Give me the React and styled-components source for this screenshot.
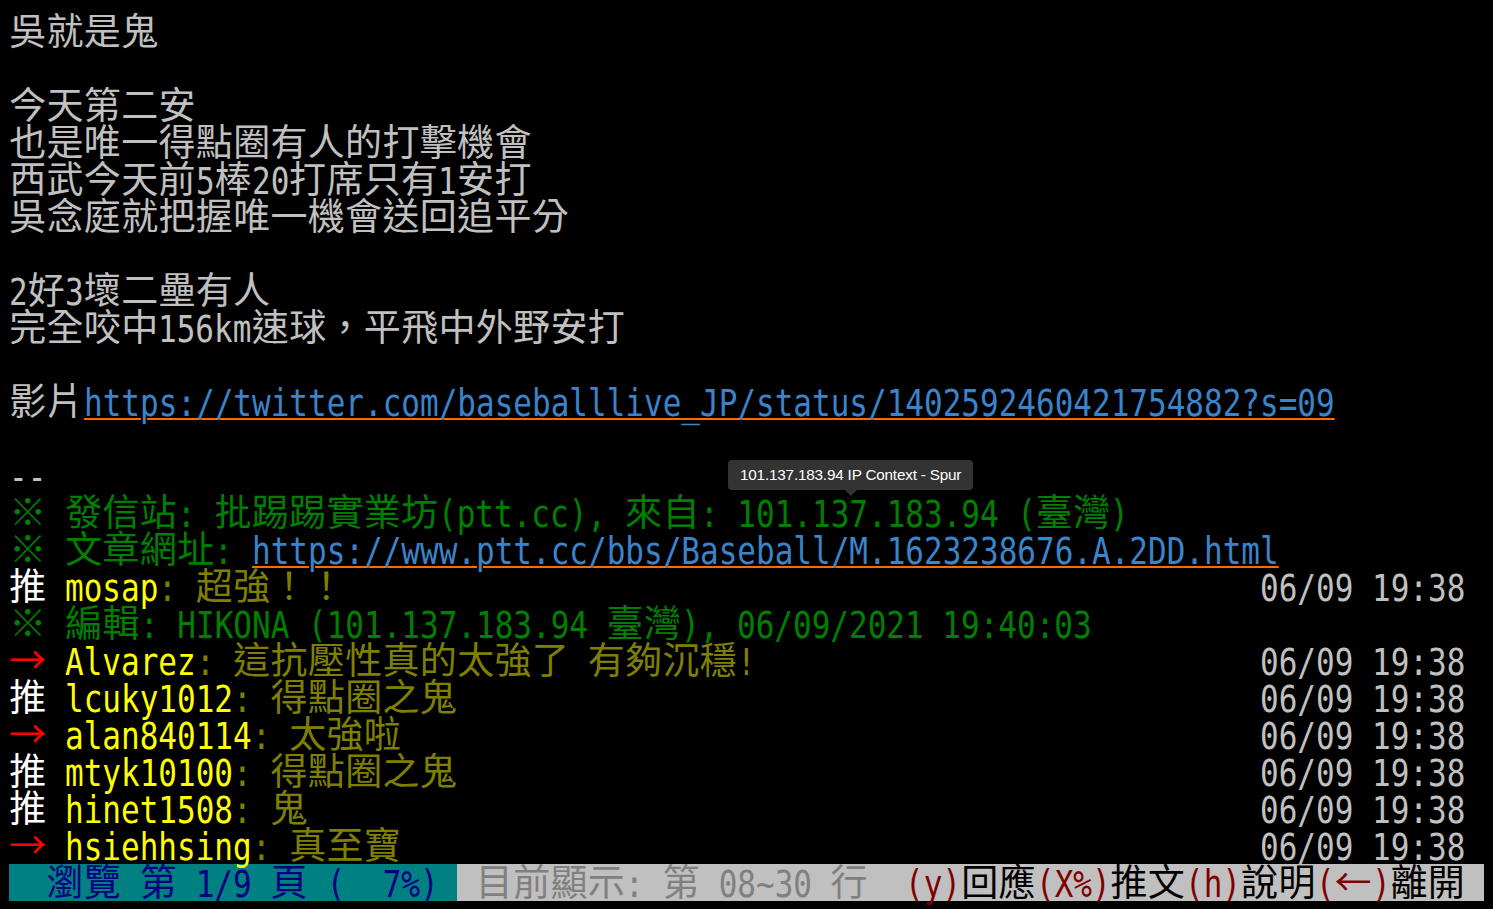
import React from 'react';
import styled, { createGlobalStyle, css } from 'styled-components';

// one terminal cell (half width) and one row, in px
const CELL = 18.67;
const ROW = 37;

const C = {
    gray: '#c0c0c0',
    white: '#ffffff',
    green: '#008000',
    yellow: '#ffff00',
    olive: '#808000',
    red: '#ff0000',
    link: '#3a84cc',
    navy: '#000080',
    teal: '#008080',
    dim: '#808080',
    maroon: '#800000',
    black: '#000000',
};

const isWide = ch => {
    const c = ch.codePointAt(0);
    return c === 0x203b || c >= 0x2190;
};

const widthOf = s => [...s].reduce((w, ch) => w + (isWide(ch) ? 2 : 1), 0);

// split a string into runs of half width text and single wide chars
const splitRuns = text => {
    const runs = [];
    let buf = '';
    [...text].forEach(ch => {
        if (isWide(ch)) {
            if (buf) runs.push({ wide: false, text: buf });
            buf = '';
            runs.push({ wide: true, text: ch });
        } else {
            buf += ch;
        }
    });
    if (buf) runs.push({ wide: false, text: buf });
    return runs;
};

const push = (tag, user, text) => {
    const head = tag === '推' ? ['推 ', 'white'] : ['→ ', 'red'];
    const body = ': ' + text;
    const used = 3 + user.length + widthOf(body);
    return [head, [user, 'yellow'], [body + ' '.repeat(67 - used), 'olive'], ['06/09 19:38', 'gray']];
};

const lines = [
    [['吳就是鬼', 'gray']],
    [],
    [['今天第二安', 'gray']],
    [['也是唯一得點圈有人的打擊機會', 'gray']],
    [['西武今天前5棒20打席只有1安打', 'gray']],
    [['吳念庭就把握唯一機會送回追平分', 'gray']],
    [],
    [['2好3壞二壘有人', 'gray']],
    [['完全咬中156km速球，平飛中外野安打', 'gray']],
    [],
    [['影片', 'gray'], ['https://twitter.com/baseballlive_JP/status/1402592460421754882?s=09', 'link', { link: true }]],
    [],
    [['--', 'gray']],
    [['※ 發信站: 批踢踢實業坊(ptt.cc), 來自: 101.137.183.94 (臺灣)', 'green']],
    [['※ 文章網址: ', 'green'], ['https://www.ptt.cc/bbs/Baseball/M.1623238676.A.2DD.html', 'link', { link: true }]],
    push('推', 'mosap', '超強！！'),
    [['※ 編輯: HIKONA (101.137.183.94 臺灣), 06/09/2021 19:40:03', 'green']],
    push('→', 'Alvarez', '這抗壓性真的太強了 有夠沉穩!'),
    push('推', 'lcuky1012', '得點圈之鬼'),
    push('→', 'alan840114', '太強啦'),
    push('推', 'mtyk10100', '得點圈之鬼'),
    push('推', 'hinet1508', '鬼'),
    push('→', 'hsiehhsing', '真至寶'),
];

const statusBar = [
    ['  瀏覽 第 1/9 頁 (  7%) ', 'navy', { bg: C.teal }],
    [' 目前顯示: 第 08~30 行  ', 'dim', { bg: C.gray }],
    ['(y)', 'maroon', { bg: C.gray }],
    ['回應', 'black', { bg: C.gray }],
    ['(X%)', 'maroon', { bg: C.gray }],
    ['推文', 'black', { bg: C.gray }],
    ['(h)', 'maroon', { bg: C.gray }],
    ['說明', 'black', { bg: C.gray }],
    ['(', 'maroon', { bg: C.gray }],
    ['←', 'maroon', { bg: C.gray }],
    [')', 'maroon', { bg: C.gray }],
    ['離開', 'black', { bg: C.gray }],
    [' ', 'black', { bg: C.gray }],
];

const Line = ({ segs }) => (
    <Row>
        {segs.flatMap(([text, color, opts = {}], i) =>
            splitRuns(text).map((run, j) =>
                run.wide ? (
                    <Wide key={`${i}-${j}`} $fg={C[color]} $bg={opts.bg}>{run.text}</Wide>
                ) : (
                    <Half key={`${i}-${j}`} $cols={run.text.length} $fg={C[color]} $bg={opts.bg}>
                        <Squeeze $link={opts.link}>{run.text}</Squeeze>
                    </Half>
                )
            )
        )}
    </Row>
);

const App = () => (
    <>
        <GlobalStyle />
        <Screen>
            {lines.map((segs, i) => <Line key={i} segs={segs} />)}
            <Line segs={statusBar} />
            <Tooltip>101.137.183.94 IP Context - Spur</Tooltip>
        </Screen>
    </>
);

const GlobalStyle = createGlobalStyle`
    html, body {
        margin: 0;
        padding: 0;
        background: #000;
    }
    body {
        overflow: hidden;
    }
`;

const Screen = styled.div`
    position: relative;
    width: 1493px;
    height: 909px;
    box-sizing: border-box;
    padding: 13px 0 0 9px;
    background: #000;
`;

const Row = styled.div`
    display: flex;
    height: ${ROW}px;
    white-space: nowrap;
`;

const Half = styled.span`
    flex: none;
    width: ${p => p.$cols * CELL}px;
    height: ${ROW}px;
    overflow: visible;
    color: ${p => p.$fg};
    background: ${p => p.$bg || 'transparent'};
`;

const Squeeze = styled.span`
    display: block;
    font-family: "DejaVu Sans Mono", monospace;
    font-size: 37px;
    line-height: 41px;
    white-space: pre;
    transform: scaleX(0.838);
    transform-origin: 0 0;
    ${p => p.$link && css`
        text-decoration: underline;
        text-decoration-color: #ff6a00;
        text-decoration-thickness: 1.5px;
        text-underline-offset: 2px;
    `}
`;

const Wide = styled.span`
    flex: none;
    width: ${CELL * 2}px;
    height: ${ROW}px;
    text-align: center;
    font-family: "Noto Sans CJK TC", "Noto Sans CJK SC", sans-serif;
    font-size: 37px;
    line-height: 33px;
    color: ${p => p.$fg};
    background: ${p => p.$bg || 'transparent'};
`;

const Tooltip = styled.div`
    position: absolute;
    left: 728px;
    top: 460px;
    height: 30px;
    padding: 0 12px;
    border-radius: 4px;
    background: #333;
    color: #fff;
    font-family: "Liberation Sans", Arial, sans-serif;
    font-size: 15.3px;
    letter-spacing: -0.2px;
    line-height: 30px;
    white-space: nowrap;
    &::after {
        content: '';
        position: absolute;
        left: 50%;
        bottom: -6px;
        margin-left: -6px;
        border-left: 6px solid transparent;
        border-right: 6px solid transparent;
        border-top: 6px solid #333;
    }
`;

export default App;
